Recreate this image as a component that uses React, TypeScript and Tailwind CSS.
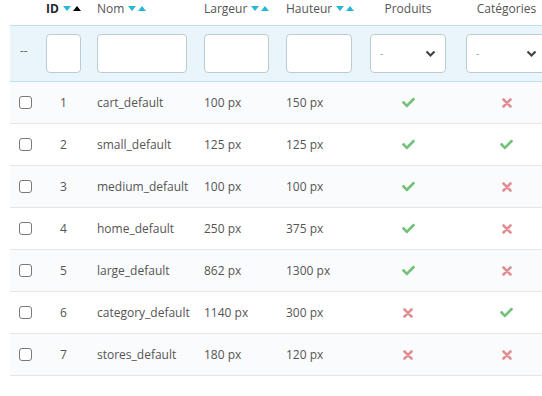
import { FaCheck } from 'react-icons/fa';

const rows = [
    { id: 1, name: 'cart_default', w: '100 px', h: '150 px', prod: true, cat: false },
    { id: 2, name: 'small_default', w: '125 px', h: '125 px', prod: true, cat: true },
    { id: 3, name: 'medium_default', w: '100 px', h: '100 px', prod: true, cat: false },
    { id: 4, name: 'home_default', w: '250 px', h: '375 px', prod: true, cat: false },
    { id: 5, name: 'large_default', w: '862 px', h: '1300 px', prod: true, cat: false },
    { id: 6, name: 'category_default', w: '1140 px', h: '300 px', prod: false, cat: true },
    { id: 7, name: 'stores_default', w: '180 px', h: '120 px', prod: false, cat: false },
];

function SortArrows({ active }: { active?: boolean }) {
    return (
        <span className="flex items-center gap-[2px] ml-[4px]">
            <svg width="8" height="5" viewBox="0 0 8 5" className="block"><path d="M0 0h8L4 5z" fill="#25b9d7" /></svg>
            <svg width="8" height="5" viewBox="0 0 8 5" className="block"><path d="M0 5h8L4 0z" fill={active ? '#000' : '#25b9d7'} /></svg>
        </span>
    );
}

function Status({ ok }: { ok: boolean }) {
    return ok
        ? <FaCheck size={13} className="text-[#72c279]" />
        : (
            <svg width="10" height="10" viewBox="0 0 10 10">
                <path d="M1.5 1.5l7 7M8.5 1.5l-7 7" stroke="#e08f95" strokeWidth="2.6" strokeLinecap="round" />
            </svg>
        );
}

function FakeSelect({ w }: { w: string }) {
    return (
        <div className={`${w} h-[39px] bg-white border border-[#bbcdd2] rounded-[4px] flex items-center justify-between pl-[9px] pr-[9px] shrink-0`}>
            <span className="text-[10px] text-[#999]">-</span>
            <svg width="11" height="8" viewBox="0 0 11 8"><path d="M1.5 1.5l4 4 4-4" stroke="#444" strokeWidth="2.2" fill="none" /></svg>
        </div>
    );
}

export default function App() {
    return (
        <div className="w-[542px] h-[396px] overflow-hidden bg-white text-[12px] text-[#555] pl-[10px]" style={{ fontFamily: '"Open Sans", sans-serif' }}>
            <div className="w-[560px]">
                {/* header */}
                <div className="flex h-[25px] leading-[17px] text-[#555]">
                    <div className="w-[36px]" />
                    <div className="w-[51px] h-[17px] font-bold text-[#25272b] flex items-center">ID<SortArrows active /></div>
                    <div className="w-[107px] h-[17px] flex items-center">Nom<SortArrows /></div>
                    <div className="w-[82px] h-[17px] flex items-center">Largeur<SortArrows /></div>
                    <div className="w-[84px] h-[17px] flex items-center">Hauteur<SortArrows /></div>
                    <div className="w-[96px]"><div className="w-[76px] text-center">Produits</div></div>
                    <div className="w-[104px]"><div className="w-[81px] text-center">Catégories</div></div>
                </div>

                {/* filters */}
                <div className="flex h-[57px] pt-[8px] bg-[#eaf5fb] border-y border-[#bfe0ee]">
                    <div className="w-[36px] pl-[10px] pt-[8px] text-[#666]">--</div>
                    <div className="w-[51px]"><div className="w-[35px] h-[39px] bg-white border border-[#bbcdd2] rounded-[4px]" /></div>
                    <div className="w-[107px]"><div className="w-[90px] h-[39px] bg-white border border-[#bbcdd2] rounded-[4px]" /></div>
                    <div className="w-[82px]"><div className="w-[65px] h-[39px] bg-white border border-[#bbcdd2] rounded-[4px]" /></div>
                    <div className="w-[84px]"><div className="w-[66px] h-[39px] bg-white border border-[#bbcdd2] rounded-[4px]" /></div>
                    <div className="w-[96px]"><FakeSelect w="w-[76px]" /></div>
                    <div className="w-[104px]"><FakeSelect w="w-[81px]" /></div>
                </div>

                {/* rows */}
                {rows.map((r, i) => (
                    <div key={r.id} className={`flex items-center h-[42px] border-b border-[#e4e6e8] ${i % 2 === 0 ? 'bg-[#fafbfc]' : 'bg-white'}`}>
                        <div className="w-[36px] pl-[9px] flex">
                            <span className="w-[13px] h-[13px] border border-[#7a7a7a] rounded-[3px] bg-white" />
                        </div>
                        <div className="w-[51px]"><div className="w-[35px] text-center">{r.id}</div></div>
                        <div className="w-[107px]">{r.name}</div>
                        <div className="w-[82px]">{r.w}</div>
                        <div className="w-[84px]">{r.h}</div>
                        <div className="w-[96px]"><div className="w-[76px] flex justify-center"><Status ok={r.prod} /></div></div>
                        <div className="w-[104px]"><div className="w-[81px] flex justify-center"><Status ok={r.cat} /></div></div>
                    </div>
                ))}
            </div>
        </div>
    );
}
